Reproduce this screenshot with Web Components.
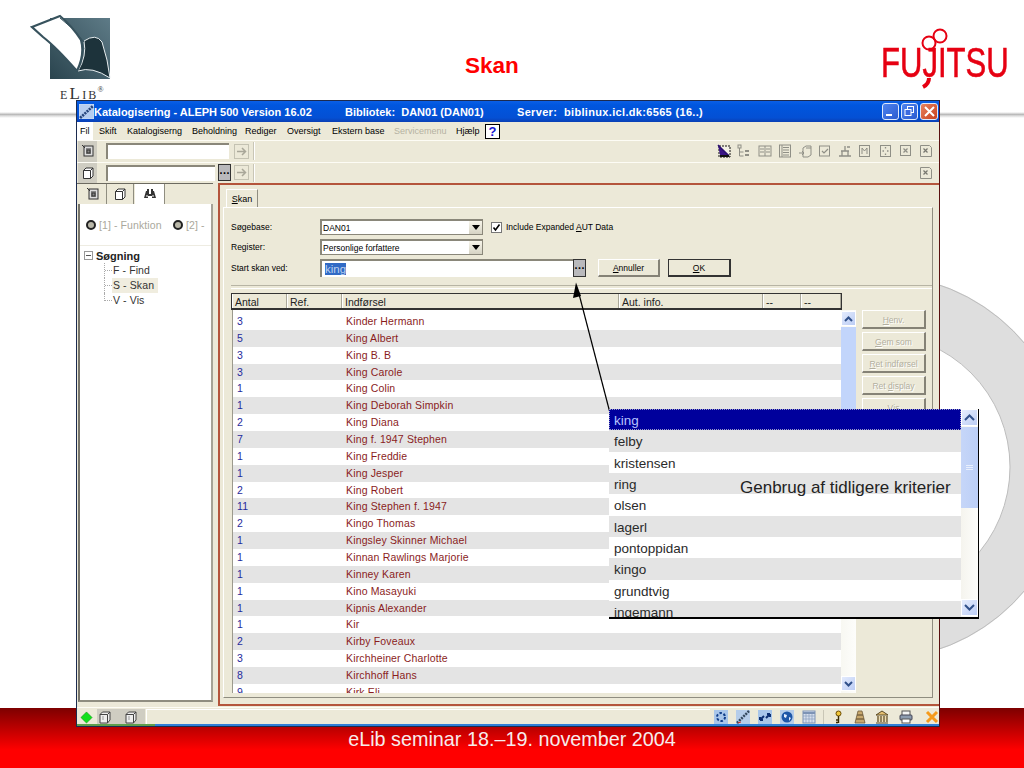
<!DOCTYPE html>
<html lang="da">
<head>
<meta charset="utf-8">
<title>Skan</title>
<style>
html,body{margin:0;padding:0;background:#fff}
</style>
</head>
<body>
<slide-page>
  <slide-header slot="head">
    <elib-logo></elib-logo>
    <slide-title>Skan</slide-title>
    <fujitsu-logo></fujitsu-logo>
  </slide-header>
  <slide-footer slot="foot">eLib seminar 18.–19. november 2004</slide-footer>

  <xp-window>
    <xp-titlebar>
      <span>Katalogisering - ALEPH 500 Version 16.02</span>
      <span>Bibliotek:  DAN01 (DAN01)</span>
      <span>Server:  biblinux.icl.dk:6565 (16..)</span>
    </xp-titlebar>
    <xp-menu></xp-menu>
    <tool-row variant="a"></tool-row>
    <tool-row variant="b"></tool-row>
    <main-split>
      <left-pane></left-pane>
      <skan-panel>
        <skan-form></skan-form>
        <result-area>
          <data-row n="3">Kinder Hermann</data-row>
          <data-row n="5">King Albert</data-row>
          <data-row n="3">King B. B</data-row>
          <data-row n="3">King Carole</data-row>
          <data-row n="1">King Colin</data-row>
          <data-row n="1">King Deborah Simpkin</data-row>
          <data-row n="2">King Diana</data-row>
          <data-row n="7">King f. 1947 Stephen</data-row>
          <data-row n="1">King Freddie</data-row>
          <data-row n="1">King Jesper</data-row>
          <data-row n="2">King Robert</data-row>
          <data-row n="11">King Stephen f. 1947</data-row>
          <data-row n="2">Kingo Thomas</data-row>
          <data-row n="1">Kingsley Skinner Michael</data-row>
          <data-row n="1">Kinnan Rawlings Marjorie</data-row>
          <data-row n="1">Kinney Karen</data-row>
          <data-row n="1">Kino Masayuki</data-row>
          <data-row n="1">Kipnis Alexander</data-row>
          <data-row n="1">Kir</data-row>
          <data-row n="2">Kirby Foveaux</data-row>
          <data-row n="3">Kirchheiner Charlotte</data-row>
          <data-row n="8">Kirchhoff Hans</data-row>
          <data-row n="9">Kirk Eli</data-row>
        </result-area>
      </skan-panel>
    </main-split>
    <status-bar></status-bar>
  </xp-window>

  <callout-arrow></callout-arrow>
  <history-popup>
    <hist-row sel>king</hist-row>
    <hist-row>felby</hist-row>
    <hist-row>kristensen</hist-row>
    <hist-row>ring</hist-row>
    <hist-row>olsen</hist-row>
    <hist-row>lagerl</hist-row>
    <hist-row>pontoppidan</hist-row>
    <hist-row>kingo</hist-row>
    <hist-row>grundtvig</hist-row>
    <hist-row>ingemann</hist-row>
  </history-popup>
</slide-page>

<script>
const UI='"Liberation Sans",Arial,sans-serif';
const def=(name,css,html,init)=>customElements.define(name,class extends HTMLElement{
  constructor(){super();this.attachShadow({mode:'open'}).innerHTML=`<style>${css}</style>${html}`;}
  connectedCallback(){if(init)init(this);}
});

/* small icon set, 14x14 */
const G='#8f8f86';
const ICONS={
  doc:`<rect x="3" y="2" width="9" height="10" fill="#ddd" stroke="#333"/><path d="M1 1l3 3M5 5h5M5 7h5M5 9h5" stroke="#333" fill="none"/><rect x="6" y="6" width="3" height="3" fill="none" stroke="#333"/>`,
  cube:`<path d="M2.5 4.5L5 2h7v8l-2.5 2.5h-7z" fill="#fff" stroke="#333"/><path d="M2.5 4.5h7v8M9.5 4.5L12 2" fill="none" stroke="#333"/>`,
  bino:`<path d="M3 4h3v3h2V4h3l2 7H9V9H5v2H1z" fill="#333"/><rect x="4" y="2" width="2" height="2" fill="#333"/><rect x="8" y="2" width="2" height="2" fill="#333"/><path d="M3 9h2M9 9h2" stroke="#fff"/>`,
  arrow:`<rect x=".5" y=".5" width="14" height="14" fill="#ece9d8" stroke="#c4c2b2"/><path d="M3 7.5h8M8 4l3.500 3.500L8 11" fill="none" stroke="#a9a799" stroke-width="1.500"/>`,
  edit:`<rect x="2" y="2" width="11" height="11" fill="#f3f1e6" stroke="#111" stroke-dasharray="2 1"/><path d="M1 1l11 10H3z" fill="#3a1585"/><path d="M1 1l11 11" stroke="#2b0f70" stroke-width="1.500"/><path d="M3 12h9" stroke="#111" stroke-width="2"/>`,
  tree:`<rect x="1" y="1" width="3" height="3" fill="none" stroke="${G}"/><path d="M2.500 4v8h4M2.500 8h4" fill="none" stroke="${G}"/><rect x="8" y="6" width="4" height="2" fill="${G}"/><rect x="8" y="10" width="4" height="2" fill="${G}"/>`,
  cols:`<rect x="1" y="2" width="12" height="10" fill="none" stroke="${G}"/><path d="M7 2v10M2 5h4M2 8h4M8 5h4M8 8h4" stroke="${G}"/>`,
  rows:`<rect x="1.500" y="1" width="11" height="12" fill="none" stroke="${G}"/><path d="M4 1v12M5 3.500h6M5 6h6M5 8.500h6M5 11h6" stroke="${G}"/>`,
  fold:`<path d="M5 4l3-2h5v9l-3 2H5z" fill="none" stroke="${G}" stroke-width="1"/><path d="M1 9h5M4 7l2 2-2 2M8 4h5" fill="none" stroke="${G}"/>`,
  check:`<rect x="1.500" y="2" width="10" height="10" fill="none" stroke="${G}"/><path d="M4 7l2 2 4-4" fill="none" stroke="${G}" stroke-width="1.200"/>`,
  bench:`<path d="M1 12h12M3 7h8M7 2v5M4 7v5M10 7v5M9 3h3" fill="none" stroke="${G}" stroke-width="1.300"/>`,
  m:`<rect x="1.500" y="1.500" width="10" height="11" fill="none" stroke="${G}"/><path d="M4 10V4l2.500 3L9 4v6" fill="none" stroke="${G}"/>`,
  dots:`<rect x="1.500" y="1.500" width="10" height="11" fill="none" stroke="${G}"/><path d="M6.500 3v1.500M3.500 7H5M8 7h1.500M6.500 9.500V11" stroke="${G}" stroke-width="1.300"/>`,
  x:`<rect x="1.500" y="1.500" width="10" height="10" fill="none" stroke="${G}"/><path d="M4.500 4.500l4 4M8.500 4.500l-4 4" stroke="${G}" stroke-width="1.200"/>`,
  x2:`<path d="M1.500 1.500h9l2 2v9h-11z" fill="none" stroke="${G}"/><path d="M4.500 4.500l4 4M8.500 4.500l-4 4" stroke="#77776f" stroke-width="1.200"/>`,
  diamond:`<path d="M7 1l6 6-6 6-6-6z" fill="#12e01c" stroke="#0a8f10" stroke-width=".6"/>`,
  box:`<path d="M2 4.500L4.500 2H12v8l-2.500 3H2z" fill="#eee" stroke="#444"/><path d="M2 4.500h7.500V13M9.500 4.500L12 2" fill="none" stroke="#444"/><path d="M4 7h2M4 9h2" stroke="#999"/>`,
  ring:`<rect x="0" y="0" width="14" height="14" fill="#a9c6ea"/><circle cx="7" cy="7" r="4" fill="none" stroke="#123f8a" stroke-width="2" stroke-dasharray="2.500 1.700"/>`,
  pen:`<rect x="0" y="0" width="14" height="14" fill="#b5cdea"/><path d="M1 13L13 1" stroke="#34495f" stroke-width="2.500" stroke-dasharray="2 1"/><path d="M2 13l3-1" stroke="#c33"/>`,
  swap:`<rect x="0" y="0" width="14" height="14" fill="#a9c6ea"/><path d="M2 10l4-4M2 10v-3M2 10h3M12 4L8 8M12 4v3M12 4H9" fill="none" stroke="#0d2f72" stroke-width="2"/>`,
  globe:`<rect x="0" y="0" width="14" height="14" fill="#b5cdea"/><circle cx="7" cy="7" r="5.500" fill="#1e57a8"/><path d="M4 4l3 1-1 3-2-1zM9 7l2 1-2 3z" fill="#e7f0ff"/>`,
  cal:`<rect x="1" y="1" width="12" height="12" fill="#d6dfee" stroke="#7d93b5"/><path d="M1 3h12" stroke="#7d93b5" stroke-width="2"/><path d="M1 6h12M1 9h12M4 4v9M7 4v9M10 4v9" stroke="#8a9ebc" stroke-width=".7"/>`,
  key:`<circle cx="7.500" cy="3.500" r="2.500" fill="#f0c63a" stroke="#6b4a00"/><path d="M7.500 6v7M5 10h2M5 12.500h2" stroke="#3a2a00" stroke-width="1.400"/>`,
  tower:`<path d="M5 1h4l1 4H4zM4 5h6l1 4H3zM3 9h8l1 4H2z" fill="#c8a86e" stroke="#6e5a3a" stroke-width=".8"/>`,
  bank:`<path d="M1 5l6-4 6 4z" fill="#e4bf73" stroke="#5b4a25"/><rect x="2" y="6" width="10" height="6" fill="#ecd49a" opacity=".6"/><path d="M3 6v6M6 6v6M9 6v6M12 6v6M1 13h12" stroke="#5b4a25" stroke-width="1.200"/>`,
  print:`<rect x="3" y="1" width="8" height="5" fill="#f5f5f5" stroke="#555"/><rect x="1" y="5" width="12" height="5" rx="1" fill="#8d9cb0" stroke="#445"/><rect x="3" y="9" width="8" height="4" fill="#fff" stroke="#555"/>`,
  close:`<path d="M2 2l10 10M12 2L2 12" stroke="#f59a1c" stroke-width="3"/>`,
  app:`<rect x="0" y="0" width="14" height="14" fill="#b6cdf0" stroke="#dce8fb" stroke-width=".6"/><path d="M1 13L13 2" stroke="#26457c" stroke-width="2.500" stroke-dasharray="2 .8"/>`
};
customElements.define('x-ico',class extends HTMLElement{
  constructor(){super();this.attachShadow({mode:'open'});}
  connectedCallback(){
    const s=+(this.getAttribute('size')||14);
    const vb=this.getAttribute('name')==='arrow'?15:14;
    this.shadowRoot.innerHTML=`<style>:host{display:block;width:${s}px;height:${s}px}svg{display:block}</style><svg width="${s}" height="${s}" viewBox="0 0 ${vb} ${vb}">${ICONS[this.getAttribute('name')]}</svg>`;
  }
});

def('slide-page',`
:host{display:block;position:relative;width:1024px;height:768px;overflow:hidden;background:#fff;font-family:${UI}}
.page{display:flex;flex-direction:column;height:100%;}
.fill{flex:1}
.ring{position:absolute;left:684px;top:274px}
.shade{height:6px;background:linear-gradient(#fff,#b5b5b5 45%,#d8d8d8 60%,#fff)}
`,`<svg class="ring" width="386" height="386" viewBox="0 0 386 386"><circle cx="193" cy="193" r="163" fill="none" stroke="#dedede" stroke-width="60"/><circle cx="193" cy="193" r="192.500" fill="none" stroke="#bdbdbd"/><circle cx="193" cy="193" r="133" fill="none" stroke="#bdbdbd"/></svg>
<div class="page" style="position:relative"><slot name="head"></slot><div class="shade"></div><div class="fill"></div><slot name="foot"></slot></div><slot></slot>`);

def('slide-header',`:host{display:flex;height:112px;position:relative}`,`<slot></slot>`);

def('elib-logo',`
:host{display:block;width:84px;margin-left:30px;padding-top:14px;text-align:center;color:#333;font-family:"Liberation Serif",serif;position:relative}
svg{display:block}
.t{display:block;margin-top:3px;font-size:12px;letter-spacing:2.200px;line-height:18px;text-align:left;padding-left:30px}
.t b{font-weight:normal;font-size:17px}
sup{position:absolute;font-size:8px;line-height:8px;margin-left:-1px;margin-top:1px}
`,`<svg width="84" height="68" viewBox="30 14 84 68"><defs><linearGradient id="g" x1="0" y1="1" x2="1" y2="0"><stop offset="0" stop-color="#2a444e"/><stop offset="1" stop-color="#5e7b87"/></linearGradient></defs>
<rect x="50" y="18" width="60" height="61" fill="url(#g)"/>
<path d="M84 41Q96 33 102 42Q108 60 110 78Q92 66 78 71Q87 56 84 41Z" fill="#1d333b" stroke="#e8eef0" stroke-width="1"/>
<path d="M32 27L60 16Q72 26 81 40Q85 54 77 71Q56 47 43 37Z" fill="#fff" stroke="#37525d" stroke-width="2.200"/>
<path d="M60 18Q74 28 84 42" fill="none" stroke="#37525d" stroke-width="1"/>
</svg><span class="t">E<b>L</b>IB<sup>®</sup></span>`);

def('slide-title',`:host{display:block;margin-left:351px;padding-top:52px;font:bold 22.500px/28px "Liberation Sans",sans-serif;color:#f00;width:70px}`,`<slot></slot>`);

def('fujitsu-logo',`
:host{display:block;position:relative;margin-left:346px;width:130px;padding-top:39px;color:#e60012;height:60px}
.t{display:block;font:42px/48px "Liberation Sans",sans-serif;-webkit-text-stroke:.6px #e60012;transform:scaleX(.74);transform-origin:0 0;white-space:nowrap}
svg{position:absolute;left:0;top:0}
`,`<span class="t">FUJITSU</span><svg width="130" height="100" viewBox="883 0 130 100"><circle cx="942" cy="36" r="6.500" fill="none" stroke="#e60012" stroke-width="2"/><circle cx="931" cy="43" r="6.500" fill="none" stroke="#e60012" stroke-width="2"/><path d="M931 78Q931 84 925 87" fill="none" stroke="#e60012" stroke-width="4"/></svg>`);

def('slide-footer',`:host{display:block;height:60px;box-sizing:border-box;padding-top:20px;background:linear-gradient(#7d0000,#ff0000 70%);color:#f7ecec;text-align:center;font:19.800px/22px "Liberation Sans",sans-serif}`,`<slot></slot>`);

def('xp-window',`:host{position:absolute;left:76px;top:100px;width:864px;height:627px;box-sizing:border-box;display:flex;flex-direction:column;background:#ece9d8;border:1px solid #1c2b4f;border-right-color:#5a1010;font-family:${UI};font-size:9.500px;color:#000}`,`<slot></slot>`);

def('xp-titlebar',`
:host{display:flex;align-items:center;height:21px;flex:none;background:linear-gradient(#0a5fe6,#0056de 20%,#0450d4 80%,#0a3fb4);color:#fff;font:bold 11px ${UI};padding-left:1px}
.s{display:flex;flex:1;white-space:pre;}
::slotted(span:nth-child(1)){width:251px}
::slotted(span:nth-child(2)){width:172px}
::slotted(span:nth-child(3)){letter-spacing:.33px}
.b{display:flex;gap:2px;margin-right:1px}
.btn{width:17px;height:17px;border:1px solid #dfe9fb;border-radius:3px;box-sizing:border-box;background:linear-gradient(135deg,#4f83ee,#2a5bd0);display:flex;align-items:center;justify-content:center}
.btn.c{background:linear-gradient(135deg,#e8835f,#c8401e);width:18px}
x-ico{margin:0 0 0 1px}
`,`<x-ico name="app" size="15"></x-ico><div class="s"><slot></slot></div><div class="b">
<div class="btn"><svg width="11" height="11"><rect x="1" y="8" width="6" height="2" fill="#fff"/></svg></div>
<div class="btn"><svg width="11" height="11"><rect x="3.500" y=".5" width="6" height="6" fill="none" stroke="#fff"/><rect x="1" y="3.500" width="6" height="6" fill="#3b6ae0" stroke="#fff"/></svg></div>
<div class="btn c"><svg width="11" height="11"><path d="M1 1l9 9M10 1l-9 9" stroke="#fff" stroke-width="2"/></svg></div></div>`);

def('xp-menu',`
:host{display:flex;align-items:center;height:18px;flex:none;font-size:9px}
span{display:block;white-space:nowrap;flex:none}
.f{background:#fff;padding:0 3px;width:10px;height:18px;line-height:18px;margin-right:6px}
.d{color:#b5b2a2}
.q{width:15px;height:15px;box-sizing:border-box;border:1px solid #000;background:#fff;color:#1414d2;font:bold 13px/14px ${UI};text-align:center}
`,`<span class="f">Fil</span><span style="width:28px">Skift</span><span style="width:65px">Katalogiserng</span><span style="width:53px">Beholdning</span><span style="width:42px">Rediger</span><span style="width:45px">Oversigt</span><span style="width:62px">Ekstern base</span><span class="d" style="width:62px">Servicemenu</span><span style="width:29px">Hjælp</span><span class="q">?</span>`);

def('tool-row',`
:host{display:flex;align-items:center;flex:none;border-top:1px solid #fdfcf5;height:20.500px;position:relative}
.ic{width:19px;height:100%;background:#cfcdc2;display:flex;align-items:center;justify-content:center;margin-left:1px}
.inp{background:#fff;border-top:2px solid #8a877a;border-left:2px solid #8a877a;height:16px;margin-left:9px;box-sizing:border-box}
.more{width:13px;height:17px;background:#b9b9bc;border:1px solid #333;box-sizing:border-box;font:bold 11px/10px ${UI};text-align:center;margin-left:3px}
.sep{width:1px;height:18px;background:#c9c6b6;border-right:1px solid #fff;margin-left:4px}
.grow{flex:1}
.tools{display:flex;gap:6.200px;margin-right:6px;align-items:center}
x-ico{flex:none}
`,`<div class="ic" id="ic"></div><div class="inp" id="inp"></div><span id="more"></span><x-ico name="arrow" size="15" id="ar"></x-ico><div class="sep"></div><div class="grow"></div><div class="tools" id="t"></div>`,
host=>{
  const r=host.shadowRoot,a=host.getAttribute('variant')==='a';
  r.getElementById('ic').innerHTML=`<x-ico name="${a?'doc':'cube'}"></x-ico>`;
  r.getElementById('inp').style.width=(a?123:109)+'px';
  r.getElementById('ar').style.marginLeft=a?'5px':'3px';
  if(!a){const m=document.createElement('div');m.className='more';m.textContent='…';r.getElementById('more').replaceWith(m);}
  const names=a?['edit','tree','cols','rows','fold','check','bench','m','dots','x','x2']:['x2'];
  r.getElementById('t').innerHTML=names.map(n=>`<x-ico name="${n}"></x-ico>`).join('');
});

def('main-split',`:host{display:flex;flex:1;min-height:0}`,`<slot></slot>`);

def('left-pane',`
:host{display:flex;flex-direction:column;width:136px;margin-right:5px;height:519px;flex:none;font-size:11px;color:#444;border-top:1px solid #6c6a60;box-sizing:border-box}
.tabs{display:flex;height:20px;flex:none;align-items:center;padding-left:3px}
.tab{width:27px;height:20px;display:flex;align-items:center;justify-content:center;border-right:1px solid #8f8d80;box-sizing:border-box}
.tab.on{background:#fff;width:30px;margin-left:1px}
.body{flex:1;background:#fff;border-left:2px solid #77756a;border-right:2px solid #a5a396;border-bottom:2px solid #8f8d80;margin-left:1px;padding-top:13px;overflow:hidden}
.radios{display:flex;align-items:center;height:16px;white-space:nowrap;color:#aaa89c;padding-left:6px;font-size:10.500px;letter-spacing:.1px;border-bottom:1px solid #eeece2;padding-bottom:12px}
.dot{width:6px;height:6px;border:2px solid #222;border-radius:50%;background:#b9b7a8;margin-right:3px;flex:none}
.tree{padding:2px 0 0 4px;position:relative}
.top{display:flex;align-items:center;height:15px;font-weight:bold;font-size:11px;color:#222}
.minus{width:7px;height:7px;border:1px solid #999;margin-right:3px;position:relative;flex:none}
.minus:after{content:"";position:absolute;left:1px;right:1px;top:3px;height:1px;background:#555}
.leaf{height:15px;line-height:15px;margin-left:20px;padding-left:8px;border-left:1px dotted #aaa;white-space:nowrap;position:relative;font-size:10.500px;color:#333;letter-spacing:.1px}
.leaf:before{content:"";position:absolute;left:0;top:7px;width:7px;border-top:1px dotted #aaa}
.leaf span{display:inline-block}
.leaf.on span{background:#f0eddf;width:45px;padding-left:1px;margin-left:-1px}
`,`<div class="tabs"><div class="tab"><x-ico name="doc"></x-ico></div><div class="tab"><x-ico name="cube"></x-ico></div><div class="tab on"><x-ico name="bino"></x-ico></div></div>
<div class="body"><div class="radios"><span class="dot"></span><span style="width:74px">[1] - Funktion</span><span class="dot"></span><span>[2] -</span></div>
<div class="tree"><div class="top"><span class="minus"></span>Søgning</div>
<div class="leaf"><span>F - Find</span></div><div class="leaf on"><span>S - Skan</span></div><div class="leaf" style="height:8px"><span>V - Vis</span></div></div></div>`);

def('skan-panel',`
:host{display:flex;flex-direction:column;width:721px;height:523px;flex:none;border:1px solid #b4553c;border-width:2px 0 2px 2px;box-sizing:border-box}
.strip{height:22px;flex:none;padding-left:6px;display:flex;align-items:flex-end}
.tab{width:32px;height:18px;box-sizing:border-box;border-right:1px solid #8f8d80;border-left:1px solid #fff;border-top:1px solid #fff;text-align:center;line-height:19px;font-size:9px}
u{text-underline-offset:1px}
.page{margin:0 6px 0 3px;height:491px;flex:none;box-sizing:border-box;border:1px solid #8f8d80;border-left-color:#fff;border-top-color:#fff;padding:11px 7px 0 7px;display:flex;flex-direction:column}
`,`<div class="strip"><div class="tab"><u>S</u>kan</div></div><div class="page"><slot></slot></div>`);

def('combo-box',`
:host{display:flex;box-sizing:border-box;background:#fff;border:1px solid #8a877a;border-top-width:2px;border-left-width:2px;height:16px;width:163px;align-items:center;font-size:8.500px;padding-left:1px;white-space:nowrap;justify-content:space-between;overflow:hidden}
.a{width:13px;height:13px;background:linear-gradient(#f7f5ea,#d6d3c4);display:flex;align-items:center;justify-content:center;flex:none}
.a:after{content:"";border:4px solid transparent;border-top:5px solid #000;border-bottom:0}
`,`<span><slot></slot></span><div class="a"></div>`);

def('x-button',`
:host{display:flex;align-items:center;justify-content:center;box-sizing:border-box;background:#ece9d8;border:1px solid #fff;border-right:2px solid #858276;border-bottom:2px solid #858276;width:62px;height:18px;font-size:8.500px;white-space:nowrap}
:host([def]){border:1px solid #333;border-right-width:2px;border-bottom-width:2px;width:63px}
:host([off]){color:#b2afa0;text-shadow:1px 1px 0 #fff;width:64px;height:19px;padding-top:1px}
`,`<slot></slot>`);

def('skan-form',`
:host{display:grid;flex:none;grid-template-columns:89px 163px auto;row-gap:4px;align-items:center;font-size:8.500px;white-space:nowrap}
.cb{display:flex;align-items:center;margin-left:8px;gap:4px}
.box{width:9px;height:9px;background:#fff;border:1px solid #777;position:relative}
.start{grid-column:2 / 4;display:flex;align-items:center}
.inp{width:253px;height:18px;box-sizing:border-box;background:#fff;border-top:2px solid #8a877a;border-left:2px solid #8a877a;padding-left:3px;font-size:11.500px;line-height:16px;color:#555}
.inp span{background:#316ac5;color:#bcd0ef}
.more{width:13px;height:18px;box-sizing:border-box;background:#b9b9bc;border:1px solid #333;font:bold 11px/11px ${UI};text-align:center}
x-button:first-of-type{margin-left:12px}
.sep{grid-column:1 / 4;height:2px;margin-top:4px;border-top:1px solid #b7b4a4;border-bottom:1px solid #fff;width:701px}
`,`<div>Søgebase:</div><combo-box>DAN01</combo-box><div class="cb"><div class="box"><svg width="9" height="9" style="display:block"><path d="M1.500 4.500l2 2.500 4-5.500" fill="none" stroke="#000" stroke-width="1.600"/></svg></div><span>Include Expanded <u>A</u>UT Data</span></div>
<div>Register:</div><combo-box>Personlige forfattere</combo-box><div></div>
<div>Start skan ved:</div><div class="start"><div class="inp"><span>king</span></div><div class="more">…</div><x-button><u>A</u>nnuller</x-button><x-button def style="margin-left:8px"><u>O</u>K</x-button></div>
<div class="sep"></div>`);

def('result-area',`
:host{display:flex;flex:1;min-height:0;margin-top:4px;gap:6px}
.col{width:625px;display:flex;flex-direction:column;flex:none}
.head{display:flex;height:17px;flex:none;width:611px;box-sizing:border-box;border:1px solid #333;border-bottom-width:2px;border-right-width:2px;font-size:10.500px;color:#222}
.head span{display:block;flex:none;box-sizing:border-box;padding:2px 0 0 2px;border-right:1px solid #aaa89a;border-left:1px solid #fff;line-height:12px}
.list{display:flex;height:383px;flex:none;margin-left:1px;border-left:1px solid #9c9a8d;overflow:hidden;background:#fff}
.rows{width:608px;flex:none;overflow:hidden;padding-top:3px}
::slotted(data-row:nth-child(even)){background:#e4e4e4}
.sb{width:15px;flex:none;background:linear-gradient(90deg,#f8f8f2,#fdfdfb);display:flex;flex-direction:column;position:relative}
.up,.dn{position:absolute;left:0;width:15px;height:15px;background:linear-gradient(135deg,#e3ebfd,#bccdf5);border:1px solid #fff;box-sizing:border-box;display:flex;align-items:center;justify-content:center}
.up{top:1px}.dn{top:366px}
.th{position:absolute;top:17px;left:0;width:15px;height:120px;background:#c2d5fb}
.btns{display:flex;flex-direction:column;gap:3px;margin-top:17px}
`,`<div class="col"><div class="head"><span style="width:55px">Antal</span><span style="width:55px">Ref.</span><span style="width:277px">Indførsel</span><span style="width:144px">Aut. info.</span><span style="width:38px">--</span><span style="width:40px">--</span></div>
<div class="list"><div class="rows"><slot></slot></div><div class="sb"><div class="up"><svg width="9" height="6"><path d="M1 5l3.500-3.500L8 5" fill="none" stroke="#30508a" stroke-width="2"/></svg></div><div class="th"></div><div class="dn"><svg width="9" height="6"><path d="M1 1l3.500 3.500L8 1" fill="none" stroke="#30508a" stroke-width="2"/></svg></div></div></div></div>
<div class="btns"><x-button off><u>H</u>env.</x-button><x-button off><u>G</u>em som</x-button><x-button off><u>R</u>et indførsel</x-button><x-button off>Ret&nbsp;<u>d</u>isplay</x-button><x-button off><u>V</u>is</x-button></div>`);

def('data-row',`
:host{display:flex;height:16.870px;line-height:16.800px;font-size:10.500px;letter-spacing:.15px;color:#8a1c1c;white-space:nowrap}
.n{width:113px;padding-left:4px;box-sizing:border-box;color:#1f2a9c;flex:none}
`,`<span class="n" id="n"></span><span><slot></slot></span>`,
h=>{h.shadowRoot.getElementById('n').textContent=h.getAttribute('n');});

def('status-bar',`
:host{display:flex;align-items:center;height:19px;flex:none;border-top:1px solid #fdfcf5;position:relative;box-sizing:border-box;background:#ece9d8;box-shadow:inset 0 -2px 0 #2f7fd8}
.line{position:absolute;left:0;bottom:0;width:78px;height:2px;background:#5d9e4d}
.ic{margin:0 4px 0 3px}
.grey{display:flex;background:#cfcdc2;width:48px;height:16px;align-items:center;gap:12px;padding-left:1px;box-sizing:border-box}
.inp{width:565px;height:16px;box-sizing:border-box;border-left:1px solid #fff;border-top:1px solid #fff;margin:0 1px}
.t{display:flex;gap:8px;align-items:center;margin-left:3px}
.sep{width:1px;height:14px;background:#c9c6b6;margin:0 -1px}
`,`<div class="line"></div><x-ico class="ic" name="diamond" size="13" style="margin-left:3px"></x-ico><div class="grey"><x-ico name="box"></x-ico><x-ico name="box"></x-ico></div><div class="inp"></div>
<div class="t"><x-ico name="ring"></x-ico><x-ico name="pen"></x-ico><x-ico name="swap"></x-ico><x-ico name="globe"></x-ico><x-ico name="cal"></x-ico><div class="sep"></div><x-ico name="key"></x-ico><x-ico name="tower"></x-ico><x-ico name="bank"></x-ico><x-ico name="print" style="margin-left:2px"></x-ico><x-ico name="close" style="margin-left:4px"></x-ico></div>`);

def('callout-arrow',`:host{position:absolute;left:560px;top:270px;width:60px;height:150px}svg{display:block}`,
`<svg width="60" height="150" viewBox="560 270 60 150"><path d="M609.500 411L578.500 292" stroke="#000" stroke-width="1.200"/><path d="M576 282.500l5 13.500-8 2z" fill="#000"/></svg>`);

def('history-popup',`
:host{position:absolute;left:609px;top:409px;width:370px;height:210px;box-sizing:border-box;display:flex;background:#fff;border-right:1px solid #000;border-bottom:2px solid #000;font-family:${UI};color:#222}
.rows{flex:1;overflow:hidden;position:relative}
::slotted(hist-row:nth-child(even)){background:#e4e4e4}
.sb{width:17px;flex:none;position:relative;background:linear-gradient(90deg,#f5f4ee,#fdfdfb)}
.up,.dn{position:absolute;left:0;width:17px;height:17px;background:linear-gradient(135deg,#e6edfd,#bccdf5);border:1px solid #fff;box-sizing:border-box;display:flex;align-items:center;justify-content:center}
.up{top:0}.dn{top:190px}
.th{position:absolute;left:0;top:18px;width:17px;height:81px;background:linear-gradient(90deg,#c6d6f8,#bccff7);display:flex;align-items:center;justify-content:center}
.note{position:absolute;left:131px;top:69px;font:17px/20px "Liberation Sans",sans-serif;color:#222;white-space:nowrap}
`,`<div class="rows"><slot></slot><div class="note">Genbrug af tidligere kriterier</div></div><div class="sb"><div class="up"><svg width="11" height="7"><path d="M1 6l4.500-4.500L10 6" fill="none" stroke="#30508a" stroke-width="2"/></svg></div><div class="th"><svg width="7" height="6"><path d="M0 .5h7M0 2.500h7M0 4.500h7" stroke="#e8effd"/></svg></div><div class="dn"><svg width="11" height="7"><path d="M1 1l4.500 4.500L10 1" fill="none" stroke="#30508a" stroke-width="2"/></svg></div></div>`);

def('hist-row',`
:host{display:block;height:21.330px;line-height:23px;padding-left:5px;font-size:13.500px;white-space:nowrap;color:#2a2a2a}
:host([sel]){background:#00009c !important;color:#b8c4ff;outline:1px dotted #9a9ac8;outline-offset:-1px}
`,`<slot></slot>`);
</script>
</body>
</html>
